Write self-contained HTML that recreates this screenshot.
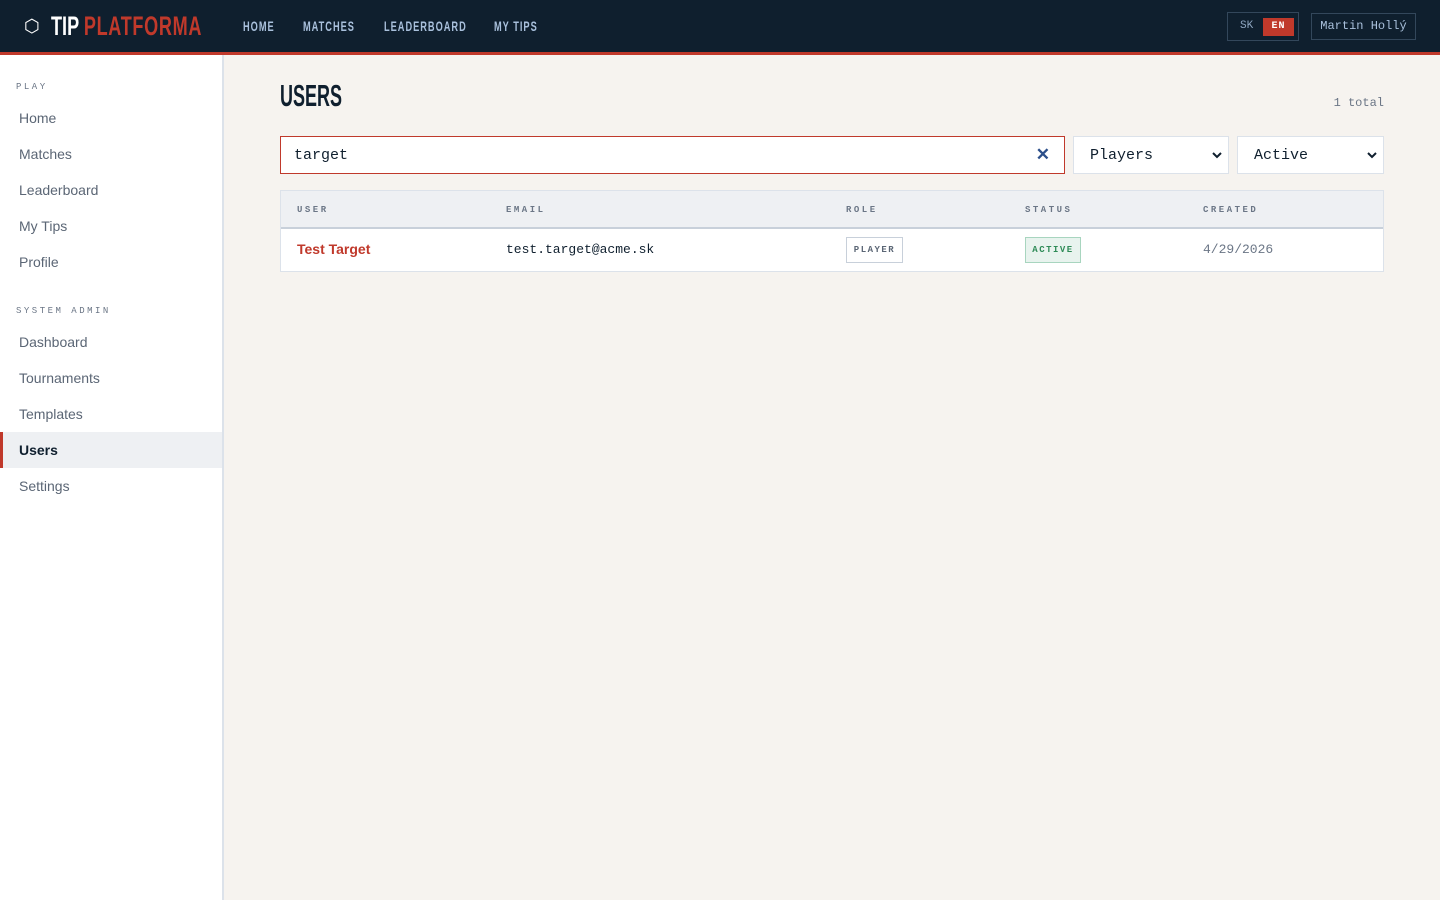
<!DOCTYPE html>
<html><head><meta charset="utf-8"><style>
*{box-sizing:border-box;margin:0;padding:0}
body{width:1440px;height:900px;background:#f6f3ef;font-family:"Liberation Sans",sans-serif;position:relative;overflow:hidden}
.hdr{position:absolute;left:0;top:0;width:1440px;height:55px;background:#0f1f2e;border-bottom:3px solid #c0392b}
.cond{font-family:"Liberation Sans Narrow","Liberation Sans",sans-serif;font-weight:bold;display:inline-block;transform-origin:left center;white-space:nowrap}
.logo{position:absolute;left:24px;top:11px;font-size:27px;color:#fff;white-space:nowrap}
.logo .hex{font-size:18px;font-weight:normal;position:relative;top:-3px}
.logo .r{color:#c0392b;letter-spacing:1px}
.nav{position:absolute;top:18px;font-size:14px;color:#a9c0dc;letter-spacing:1.5px;transform:scaleX(.66)}
.mono{font-family:"Liberation Mono",monospace}
.lang{position:absolute;left:1227px;top:12px;width:72px;height:29px;border:1px solid #33475b}
.lang .sk{position:absolute;left:12px;top:7px;font-size:11px;color:#8ea6c0}
.lang .en{position:absolute;left:35px;top:5px;width:31px;height:18px;background:#c0392b;color:#fff;font-size:10px;font-weight:bold;text-align:center;line-height:18px;letter-spacing:1px}
.user{position:absolute;left:1311px;top:13px;width:105px;height:27px;border:1px solid #33475b;color:#a9c0dc;font-size:12px;text-align:center;line-height:25px}
.side{position:absolute;left:0;top:55px;width:224px;height:845px;background:#fff;border-right:2px solid #dce2ea}
.sec{position:absolute;left:16px;font-size:9px;letter-spacing:2.5px;color:#6b7686}
.it{position:absolute;left:0;width:222px;height:36px;line-height:36px;padding-left:19px;font-size:14px;color:#5b6675}
.it.act{background:#eef0f3;color:#0f1f2e;font-weight:bold;border-left:3px solid #c0392b;padding-left:16px}
h1{position:absolute;left:280px;top:78px;font-size:31px;color:#0f1f2e;transform:scaleX(.58)}
.total{position:absolute;right:56px;top:96px;font-size:12px;color:#6b7686}
.search{position:absolute;left:280px;top:136px;width:785px;height:38px;background:#fff;border:1px solid #c0392b;font-size:15px;color:#0f1f2e;padding:10px 13px}
.search .x{position:absolute;right:14px;top:8px;color:#2c4f8a;font-weight:bold;font-size:17px;font-family:"Liberation Sans",sans-serif}
.sel{position:absolute;top:136px;height:38px;background:#fff;border:1px solid #dce2ea;font-size:15px;color:#0f1f2e;padding:10px 16px}
.sel svg{position:absolute;right:6px;top:14px}
.tbl{position:absolute;left:280px;top:190px;width:1104px;height:82px;background:#fff;border:1px solid #dce2ea}
.th{position:absolute;top:0;left:0;width:1102px;height:38px;background:#eef0f3;border-bottom:2px solid #c8d0da}
.h{position:absolute;top:14px;font-size:9px;letter-spacing:2.5px;color:#6b7686;font-weight:bold}
.c{position:absolute;top:51px;font-size:13px}
.badge{position:absolute;top:46px;height:26px;font-size:9px;font-weight:bold;letter-spacing:1.5px;line-height:24px;text-align:center}
</style></head><body>
<div class="hdr">
 <div class="logo"><span class="hex">⬡</span><span class="cond" style="transform:scaleX(.67);position:absolute;left:27px;top:0">TIP <span class="r">PLATFORMA</span></span></div>
 <span class="nav cond" style="left:243px">HOME</span>
 <span class="nav cond" style="left:303px">MATCHES</span>
 <span class="nav cond" style="left:384px">LEADERBOARD</span>
 <span class="nav cond" style="left:494px">MY TIPS</span>
 <div class="lang mono"><span class="sk">SK</span><span class="en">EN</span></div>
 <div class="user mono">Martin Hollý</div>
</div>
<div class="side">
 <div class="sec mono" style="top:27px">PLAY</div>
 <div class="it" style="top:45px">Home</div>
 <div class="it" style="top:81px">Matches</div>
 <div class="it" style="top:117px">Leaderboard</div>
 <div class="it" style="top:153px">My Tips</div>
 <div class="it" style="top:189px">Profile</div>
 <div class="sec mono" style="top:251px">SYSTEM ADMIN</div>
 <div class="it" style="top:269px">Dashboard</div>
 <div class="it" style="top:305px">Tournaments</div>
 <div class="it" style="top:341px">Templates</div>
 <div class="it act" style="top:377px">Users</div>
 <div class="it" style="top:413px">Settings</div>
</div>
<h1 class="cond">USERS</h1>
<div class="total mono">1 total</div>
<div class="search mono">target<span class="x">✕</span></div>
<div class="sel mono" style="left:1073px;width:156px">Players<svg width="10" height="8" viewBox="0 0 10 8"><path d="M1 2l4 4 4-4" stroke="#0f1f2e" stroke-width="2" fill="none"/></svg></div>
<div class="sel mono" style="left:1237px;width:147px">Active<svg width="10" height="8" viewBox="0 0 10 8"><path d="M1 2l4 4 4-4" stroke="#0f1f2e" stroke-width="2" fill="none"/></svg></div>
<div class="tbl">
 <div class="th">
  <span class="h mono" style="left:16px">USER</span>
  <span class="h mono" style="left:225px">EMAIL</span>
  <span class="h mono" style="left:565px">ROLE</span>
  <span class="h mono" style="left:744px">STATUS</span>
  <span class="h mono" style="left:922px">CREATED</span>
 </div>
 <span class="c" style="left:16px;top:50px;color:#c0392b;font-weight:bold;font-size:14px">Test Target</span>
 <span class="c mono" style="left:225px;color:#0f1f2e">test.target@acme.sk</span>
 <span class="badge mono" style="left:565px;width:57px;border:1px solid #c8d0da;color:#5b6675">PLAYER</span>
 <span class="badge mono" style="left:744px;width:56px;border:1px solid #a8d5bf;background:#e8f3ee;color:#2e8b57">ACTIVE</span>
 <span class="c mono" style="left:922px;color:#6b7686">4/29/2026</span>
</div>
</body></html>
